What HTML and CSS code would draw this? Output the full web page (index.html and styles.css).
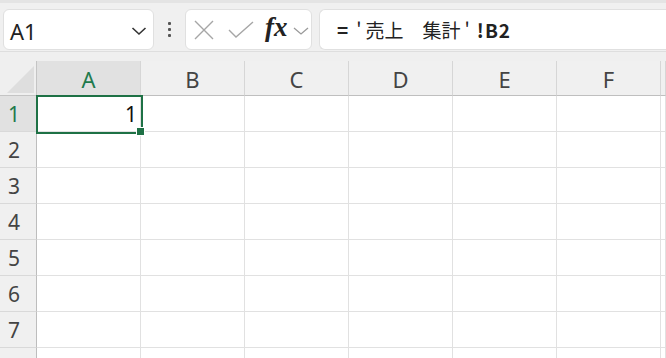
FILE: index.html
```html
<!DOCTYPE html>
<html lang="ja">
<head>
<meta charset="UTF-8">
<meta name="viewport" content="width=device-width, initial-scale=1.0">
<title>Sheet</title>
<link rel="stylesheet" href="styles.css">
</head>
<body>
<div class="titlebar"></div>
<div class="toolbar">
  <div class="namebox">
    <span class="name">A1</span>
    <svg class="chev" width="16" height="10" viewBox="0 0 16 10"><path d="M1.5 2 L8 8 L14.5 2" fill="none" stroke="#333" stroke-width="1.6"/></svg>
  </div>
  <div class="grip"><i></i><i></i><i></i></div>
  <div class="fxbox">
    <svg class="ico-x" width="22" height="20" viewBox="0 0 22 20"><path d="M2 1 L20 19 M20 1 L2 19" fill="none" stroke="#a6a6a6" stroke-width="1.4"/></svg>
    <svg class="ico-ok" width="26" height="18" viewBox="0 0 26 18"><path d="M1 9 L8 16 L25 1" fill="none" stroke="#a6a6a6" stroke-width="1.4"/></svg>
    <span class="fx">fx</span>
    <svg class="chev-sm" width="16" height="8" viewBox="0 0 16 8"><path d="M1 1 L8 7 L15 1" fill="none" stroke="#9a9a9a" stroke-width="1.3"/></svg>
  </div>
  <div class="formula"><span class="eq">=</span><span class="q">'</span>売上　集計<span class="q">'</span><span class="ref">!B2</span></div>
</div>
<div class="sheet">
  <div class="grid" id="grid"></div>
</div>

<script>
// build the visible part of the sheet
const cols = ['A', 'B', 'C', 'D', 'E', 'F', ''];
const grid = document.getElementById('grid');

function cell(cls, text) {
  const d = document.createElement('div');
  d.className = cls;
  d.textContent = text || '';
  grid.appendChild(d);
  return d;
}

cell('corner');
cols.forEach((c, i) => cell(i === 0 ? 'colhead active' : 'colhead', c));

for (let r = 1; r <= 8; r++) {
  // row 8 is cut by the window edge, its number is not visible
  cell(r === 1 ? 'rowhead active' : 'rowhead', r < 8 ? r : '');
  cols.forEach((c, i) => {
    if (r === 1 && i === 0) {
      cell('cell selected', '1');
    } else {
      cell('cell');
    }
  });
}
</script>
</body>
</html>
```
FILE: styles.css
```css
body {
  margin: 0;
  padding: 0;
  width: 666px;
  height: 358px;
  overflow: hidden;
  background-color: #efefef;
  font-family: "Noto Sans", "Open Sans", sans-serif;
  color: #333;
}
.titlebar {
  height: 3px;
  background-color: #e4e4e4;
}
.toolbar {
  display: flex;
  align-items: center;
  height: 41px;
  padding: 6px 0 1px 3px;
  border-bottom: 1px solid #dedede;
  background-color: #f0f0f0;
}
.namebox, .fxbox, .formula {
  height: 41px;
  box-sizing: border-box;
  background: white;
  border: 1px solid #e0e0e0;
  border-radius: 6px;
  display: flex;
  align-items: center;
}
.namebox {
  width: 151px;
  padding: 0 0 0 6px;
}
.name {
  font-size: 22px;
  color: #222;
  flex: 1;
  padding-top: 2px;
}
.chev {
  margin: 2px 6px 0 0;
}
.grip {
  width: 31px;
  display: flex;
  flex-direction: column;
  align-items: center;
  gap: 3px;
}
.grip i {
  width: 3px;
  height: 3px;
  border-radius: 1px;
  background-color: #555;
}
.fxbox {
  width: 127px;
  padding-left: 7px;
}
.ico-x {
  margin-top: 1px;
}
.ico-ok {
  margin: 0 0 0 13px;
}
.fx {
  font-family: "Liberation Serif", "DejaVu Serif", serif;
  font-style: italic;
  font-weight: bold;
  font-size: 27px;
  color: #222;
  margin: -5px 0 0 11px;
}
.chev-sm {
  margin: 2px 0 0 5px;
}
.formula {
  flex: 1;
  margin-left: 7px;
  border-right: none;
  border-radius: 6px 0 0 6px;
  padding-left: 17px;
  font-family: "Noto Sans CJK JP", sans-serif;
  font-size: 19px;
  color: #222;
  white-space: pre;
}
.formula .eq {
  font-weight: bold;
  margin-right: 4px;
}
.formula .q {
  margin: 0 4px;
}
.formula .ref {
  font-weight: bold;
  letter-spacing: 1px;
  margin-left: 3px;
}
.sheet {
  padding-top: 9px;
  background-color: #efefef;
}
.grid {
  display: grid;
  grid-template-columns: 37px repeat(6, 104px) 1fr;
  grid-template-rows: 35px repeat(8, 36px);
}
.corner, .colhead, .rowhead, .cell {
  box-sizing: border-box;
}
.corner {
  position: relative;
  background-color: #efefef;
  border-right: 1px solid #c4c4c4;
  border-bottom: 1px solid #c4c4c4;
}
.corner::after {
  content: "";
  position: absolute;
  left: 7px;
  top: 5px;
  width: 27px;
  height: 27px;
  background-color: #dedede;
  clip-path: polygon(100% 0, 100% 100%, 0 100%);
}
.colhead {
  background-color: #f0f0f0;
  border-right: 1px solid #d6d6d6;
  border-bottom: 1px solid #bfbfbf;
  display: flex;
  align-items: center;
  justify-content: center;
  font-size: 22px;
  color: #444;
  padding-top: 1px;
}
.rowhead {
  background-color: #f0f0f0;
  border-right: 1px solid #bdbdbd;
  border-bottom: 1px solid #d9d9d9;
  display: flex;
  align-items: center;
  padding-left: 8px;
  font-size: 21px;
  color: #444;
}
.colhead.active, .rowhead.active {
  background-color: #e1e1e1;
  color: #1f7a4d;
}
.cell {
  background: white;
  border-right: 1px solid #e1e1e1;
  border-bottom: 1px solid #e1e1e1;
}
.cell.selected {
  position: relative;
  display: flex;
  align-items: center;
  justify-content: flex-end;
  padding-right: 3px;
  font-size: 21px;
  color: #111;
}
.cell.selected::before {
  content: "";
  position: absolute;
  left: -1px;
  top: -1px;
  width: 107px;
  height: 39px;
  box-sizing: border-box;
  border: 2px solid #1e7145;
}
.cell.selected::after {
  content: "";
  position: absolute;
  left: 100px;
  top: 32px;
  width: 7px;
  height: 7px;
  background-color: #1e7145;
  outline: 1px solid white;
}
```
